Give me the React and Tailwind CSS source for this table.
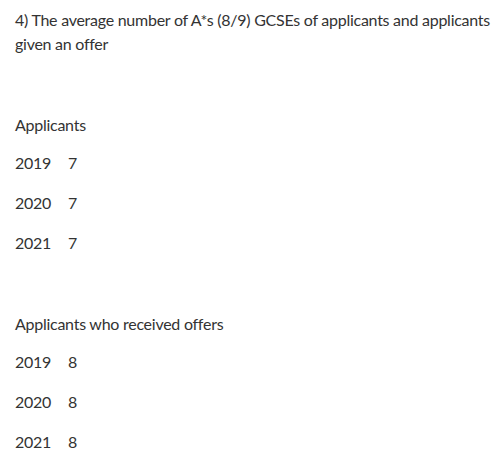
export default function App() {
  const applicants = [
    ['2019', '7'],
    ['2020', '7'],
    ['2021', '7'],
  ];
  const offers = [
    ['2019', '8'],
    ['2020', '8'],
    ['2021', '8'],
  ];

  return (
    <div className="bg-white pl-[15px] pr-[8px] pt-[8px] font-['Lato','Liberation_Sans',sans-serif] text-[16px] leading-[24px] tracking-[-0.26px] text-[#333]">
      <p>
        4) The average number of A*s (8/9) GCSEs of applicants and applicants given an offer
      </p>

      {/* Applicants */}
      <p className="mt-[57px]">Applicants</p>
      <div className="mt-[14px] flex flex-col gap-[16px]">
        {applicants.map(([year, value]) => (
          <div key={year} className="flex">
            <span className="w-[53px]">{year}</span>
            <span>{value}</span>
          </div>
        ))}
      </div>

      {/* Offers */}
      <p className="mt-[57px]">Applicants who received offers</p>
      <div className="mt-[14px] flex flex-col gap-[16px]">
        {offers.map(([year, value]) => (
          <div key={year} className="flex">
            <span className="w-[53px]">{year}</span>
            <span>{value}</span>
          </div>
        ))}
      </div>
    </div>
  );
}
